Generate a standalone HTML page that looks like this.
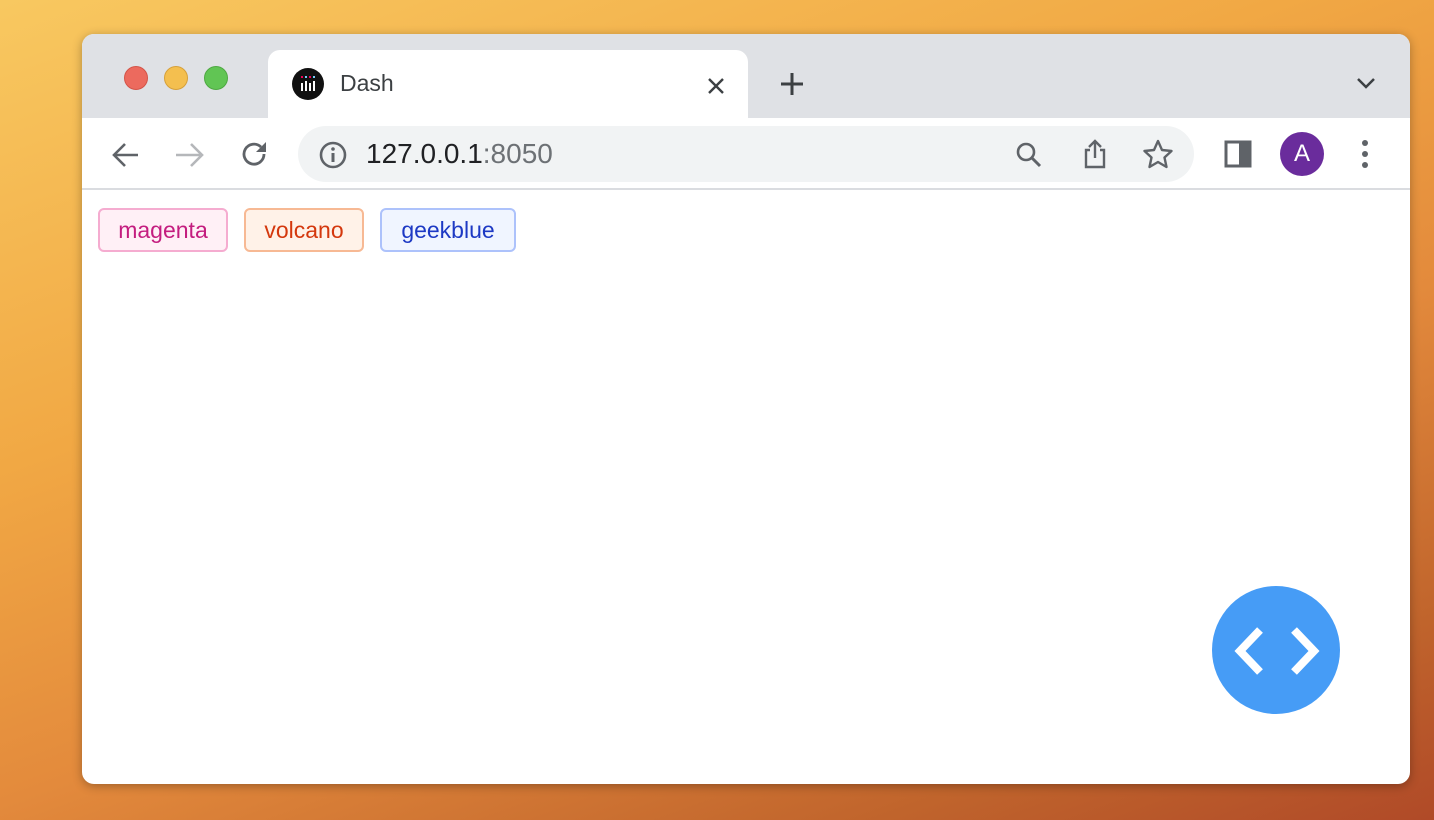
<!DOCTYPE html>
<html><head><style>
*{margin:0;padding:0;box-sizing:border-box}
body{width:1434px;height:820px;overflow:hidden;position:relative;font-family:"Liberation Sans",sans-serif;
background:linear-gradient(160deg,#f8c860 0%,#f1a844 35%,#e38a3c 60%,#c0642c 85%,#b04a28 100%);}
.win{position:absolute;left:82px;top:34px;width:1328px;height:750px;border-radius:12px;background:#fff;overflow:hidden;box-shadow:0 2px 10px rgba(0,0,0,.3)}
.tabbar{position:absolute;left:0;top:0;width:100%;height:84px;background:#dfe1e5}
.dot{position:absolute;top:32px;width:24px;height:24px;border-radius:50%}
.tab{position:absolute;left:186px;top:16px;width:480px;height:68px;background:#fff;border-radius:12px 12px 0 0}
.toolbar{position:absolute;top:84px;left:0;width:100%;height:72px;background:#fff;border-bottom:2px solid #dadce0}
.omni{position:absolute;left:216px;top:8px;width:896px;height:56px;border-radius:28px;background:#f1f3f4}
.tag{position:absolute;top:174px;height:44px;border:2px solid;border-radius:6px;font-size:23px;line-height:40px;text-align:center}
</style></head><body>
<div class="win">
<div class="tabbar">
<div class="dot" style="left:42px;background:#ec6a5e;border:1px solid #d35448"></div>
<div class="dot" style="left:82px;background:#f4bf4f;border:1px solid #d6a03a"></div>
<div class="dot" style="left:122px;background:#61c554;border:1px solid #4ea842"></div>
<div class="tab">
<div style="position:absolute;left:24px;top:18px;width:32px;height:32px;border-radius:50%;background:#111"></div>
<svg style="position:absolute;left:31px;top:25px" width="18" height="18"><g stroke="#fff" stroke-width="2"><path d="M3 8v8M7 6v10M11 8v8M15 6v10"/></g><g fill="#e05"><rect x="2" y="1" width="2" height="2"/><rect x="6" y="1" width="2" height="2" fill="#7cf"/><rect x="10" y="1" width="2" height="2"/><rect x="14" y="1" width="2" height="2" fill="#7cf"/></g></svg>
<div style="position:absolute;left:72px;top:20px;font-size:23px;color:#3c4043">Dash</div>
<svg style="position:absolute;left:439px;top:27px" width="18" height="18"><path d="M2 2l14 14M16 2L2 16" stroke="#3c4043" stroke-width="2.4"/></svg>
</div>
<svg style="position:absolute;left:698px;top:38px" width="24" height="24"><path d="M12 1v22M1 12h22" stroke="#3c4043" stroke-width="3"/></svg>
<svg style="position:absolute;left:1274px;top:42px" width="20" height="14"><path d="M2 3l8 8 8-8" stroke="#3c4043" stroke-width="2.5" fill="none"/></svg>
</div>
<div class="toolbar">
<svg style="position:absolute;left:28px;top:22px" width="32" height="30"><path d="M28 15H4M15 4L4 15l11 11" stroke="#5f6368" stroke-width="2.6" fill="none"/></svg>
<svg style="position:absolute;left:92px;top:22px" width="32" height="30"><path d="M2 15h24M17 4l11 11-11 11" stroke="#b5b7ba" stroke-width="2.6" fill="none"/></svg>
<svg style="position:absolute;left:156px;top:20px" width="32" height="32"><path d="M26 16a10 10 0 1 1-3-7" stroke="#5f6368" stroke-width="2.8" fill="none"/><path d="M28 4v10H18z" fill="#5f6368"/></svg>
<div class="omni">
<svg style="position:absolute;left:20px;top:14px" width="30" height="30"><circle cx="15" cy="15" r="12" stroke="#5f6368" stroke-width="2.6" fill="none"/><path d="M15 13v9" stroke="#5f6368" stroke-width="3"/><circle cx="15" cy="9" r="1.8" fill="#5f6368"/></svg>
<div style="position:absolute;left:68px;top:12px;font-size:28px;color:#202124">127.0.0.1<span style="color:#6d7175">:8050</span></div>
<svg style="position:absolute;left:716px;top:14px" width="30" height="30"><circle cx="12" cy="12" r="8" stroke="#5f6368" stroke-width="2.6" fill="none"/><path d="M18 18l8 8" stroke="#5f6368" stroke-width="3"/></svg>
<svg style="position:absolute;left:782px;top:12px" width="30" height="32"><path d="M10 12H6v17h18V12h-4M15 20V3M9 9l6-6 6 6" stroke="#5f6368" stroke-width="2.4" fill="none"/></svg>
<svg style="position:absolute;left:844px;top:12px" width="32" height="32"><path d="M16 3l4 9 9.5 1-7 6.5 2 9.5-8.5-5-8.5 5 2-9.5-7-6.5 9.5-1z" stroke="#5f6368" stroke-width="2.4" fill="none" stroke-linejoin="round"/></svg>
</div>
<svg style="position:absolute;left:1142px;top:22px" width="28" height="28"><rect x="2" y="2" width="24" height="24" stroke="#5f6368" stroke-width="3" fill="none"/><rect x="15" y="2" width="11" height="24" fill="#5f6368"/></svg>
<div style="position:absolute;left:1198px;top:14px;width:44px;height:44px;border-radius:50%;background:#6a2c9c;color:#fff;font-size:24px;text-align:center;line-height:44px">A</div>
<svg style="position:absolute;left:1276px;top:20px" width="14" height="32"><circle cx="7" cy="5" r="3" fill="#5f6368"/><circle cx="7" cy="16" r="3" fill="#5f6368"/><circle cx="7" cy="27" r="3" fill="#5f6368"/></svg>
</div>
<div class="tag" style="left:16px;width:130px;color:#c41d7f;background:#fff0f6;border-color:#f5acd0">magenta</div>
<div class="tag" style="left:162px;width:120px;color:#d4380d;background:#fff2e8;border-color:#f7b994">volcano</div>
<div class="tag" style="left:298px;width:136px;color:#1d39c4;background:#f0f5ff;border-color:#adc2fb">geekblue</div>
<div style="position:absolute;left:1130px;top:552px;width:128px;height:128px;border-radius:50%;background:#469cf6"></div>
<svg style="position:absolute;left:1148px;top:592px" width="94" height="50"><path d="M30 4L10 25l20 21M64 4l20 21-20 21" stroke="#fff" stroke-width="8" fill="none"/></svg>
</div>
</body></html>
